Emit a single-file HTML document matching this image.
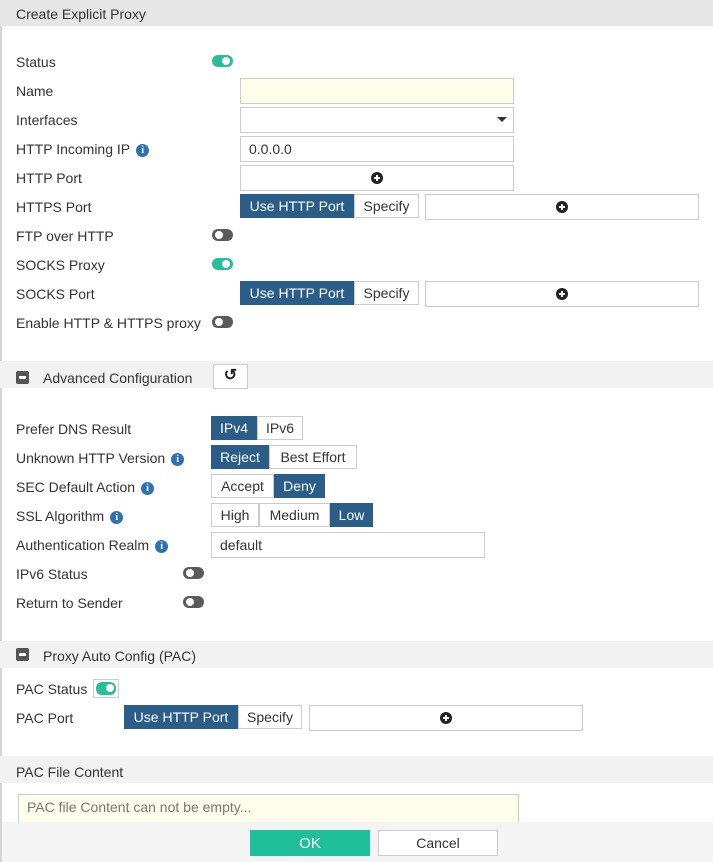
<!DOCTYPE html>
<html><head><meta charset="utf-8"><style>
*{box-sizing:border-box;margin:0;padding:0}
body{width:713px;height:862px;overflow:hidden;background:#fff;font-family:"Liberation Sans",sans-serif;font-size:14px;color:#333;position:relative}
.a{position:absolute}
.lbl{position:absolute;left:16px;line-height:16px;white-space:nowrap}
.bar{position:absolute;left:0;width:713px;background:#f2f2f2}
.inp{position:absolute;border:1px solid #ccc;background:#fff;height:26px}
.tg{position:absolute;width:21px;height:12px;border-radius:6px;background:#5a5a5a}
.tg::after{content:"";position:absolute;top:2px;left:3px;width:8px;height:8px;border-radius:50%;background:#fff}
.tg.on{background:#26bf97}
.tg.on::after{left:10px}
.btn{position:absolute;height:24px;border:1px solid #ccc;background:#fff;text-align:center;line-height:22px;white-space:nowrap}
.btn.s{background:#2a5d88;border-color:#2a5d88;color:#fff}
.info{display:inline-block;width:13px;height:13px;border-radius:50%;background:#2f72b4;color:#fff;font-size:10px;font-weight:bold;text-align:center;line-height:13px;vertical-align:1px;margin-left:6px;font-family:"Liberation Serif",serif}
.plus{position:absolute;width:12px;height:12px;border-radius:50%;background:#222}
.plus::before{content:"";position:absolute;left:3px;top:5px;width:6px;height:2px;background:#fff}
.plus::after{content:"";position:absolute;left:5px;top:3px;width:2px;height:6px;background:#fff}
.minus{position:absolute;left:16px;width:13px;height:13px;border-radius:2px;background:#555}
.minus::after{content:"";position:absolute;left:3px;top:5px;width:7px;height:3px;background:#fff}
</style></head><body>
<div class="a" style="left:0;top:0;width:713px;height:26px;background:#e6e6e6"></div>
<div class="lbl" style="top:6px">Create Explicit Proxy</div>
<div class="a" style="left:0;top:26px;width:2px;height:836px;background:#d4d4d4"></div>

<div class="lbl" style="top:54px">Status</div><div class="tg on" style="left:212px;top:55px"></div>
<div class="lbl" style="top:83px">Name</div><div class="inp" style="left:240px;top:78px;width:274px;background:#fefeea"></div>
<div class="lbl" style="top:112px">Interfaces</div><div class="inp" style="left:240px;top:107px;width:274px"></div>
<div class="a" style="left:497px;top:117px;border-left:5px solid transparent;border-right:5px solid transparent;border-top:5px solid #333"></div>
<div class="lbl" style="top:141px">HTTP Incoming IP<span class="info">i</span></div><div class="inp" style="left:240px;top:136px;width:274px;padding:4px 8px">0.0.0.0</div>
<div class="lbl" style="top:170px">HTTP Port</div><div class="inp" style="left:240px;top:165px;width:274px"></div><div class="plus" style="left:371px;top:172px"></div>
<div class="lbl" style="top:199px">HTTPS Port</div>
<div class="btn s" style="left:240px;top:194px;width:114px">Use HTTP Port</div><div class="btn" style="left:354px;top:194px;width:65px">Specify</div>
<div class="inp" style="left:425px;top:194px;width:274px"></div><div class="plus" style="left:556px;top:201px"></div>
<div class="lbl" style="top:228px">FTP over HTTP</div><div class="tg" style="left:212px;top:229px"></div>
<div class="lbl" style="top:257px">SOCKS Proxy</div><div class="tg on" style="left:212px;top:258px"></div>
<div class="lbl" style="top:286px">SOCKS Port</div>
<div class="btn s" style="left:240px;top:281px;width:114px">Use HTTP Port</div><div class="btn" style="left:354px;top:281px;width:65px">Specify</div>
<div class="inp" style="left:425px;top:281px;width:274px"></div><div class="plus" style="left:556px;top:288px"></div>
<div class="lbl" style="top:315px">Enable HTTP &amp; HTTPS proxy</div><div class="tg" style="left:212px;top:316px"></div>

<div class="bar" style="top:361px;height:27px"></div>
<div class="minus" style="top:371px"></div>
<div class="lbl" style="left:43px;top:370px">Advanced Configuration</div>
<div class="btn" style="left:213px;top:364px;width:35px;height:25px;font-weight:bold;font-size:16px;color:#222">&#x21BA;</div>

<div class="lbl" style="top:421px">Prefer DNS Result</div>
<div class="btn s" style="left:211px;top:416px;width:46px">IPv4</div><div class="btn" style="left:257px;top:416px;width:46px">IPv6</div>
<div class="lbl" style="top:450px">Unknown HTTP Version<span class="info">i</span></div>
<div class="btn s" style="left:211px;top:445px;width:58px">Reject</div><div class="btn" style="left:269px;top:445px;width:88px">Best Effort</div>
<div class="lbl" style="top:479px">SEC Default Action<span class="info">i</span></div>
<div class="btn" style="left:211px;top:474px;width:63px">Accept</div><div class="btn s" style="left:274px;top:474px;width:51px">Deny</div>
<div class="lbl" style="top:508px">SSL Algorithm<span class="info">i</span></div>
<div class="btn" style="left:211px;top:503px;width:48px">High</div><div class="btn" style="left:259px;top:503px;width:71px">Medium</div><div class="btn s" style="left:330px;top:503px;width:43px">Low</div>
<div class="lbl" style="top:537px">Authentication Realm<span class="info">i</span></div>
<div class="inp" style="left:211px;top:532px;width:274px;padding:4px 8px">default</div>
<div class="lbl" style="top:566px">IPv6 Status</div><div class="tg" style="left:183px;top:567px"></div>
<div class="lbl" style="top:595px">Return to Sender</div><div class="tg" style="left:183px;top:596px"></div>

<div class="bar" style="top:641px;height:27px"></div>
<div class="minus" style="top:648px"></div>
<div class="lbl" style="left:43px;top:648px">Proxy Auto Config (PAC)</div>
<div class="lbl" style="top:681px">PAC Status</div>
<div class="a" style="left:93px;top:679px;width:26px;height:19px;border:1px solid #ccc"></div>
<div class="tg on" style="left:96px;top:682px;width:20px;height:13px"></div>
<div class="lbl" style="top:710px">PAC Port</div>
<div class="btn s" style="left:124px;top:705px;width:114px">Use HTTP Port</div><div class="btn" style="left:238px;top:705px;width:64px">Specify</div>
<div class="inp" style="left:309px;top:705px;width:274px"></div><div class="plus" style="left:440px;top:712px"></div>

<div class="bar" style="top:756px;height:27px"></div>
<div class="lbl" style="top:764px">PAC File Content</div>
<div class="a" style="left:18px;top:794px;width:501px;height:30px;border:1px solid #ccc;background:#fefeea;color:#777;padding:4px 8px">PAC file Content can not be empty...</div>

<div class="a" style="left:0;top:822px;width:713px;height:40px;background:#f4f4f4"></div>
<div class="a" style="left:0;top:822px;width:2px;height:40px;background:#d4d4d4"></div>
<div class="btn" style="left:250px;top:830px;width:120px;height:26px;line-height:26px;background:#1fbf9a;border-color:#1fbf9a;color:#fff;font-size:15px">OK</div>
<div class="btn" style="left:378px;top:830px;width:120px;height:26px;line-height:25px">Cancel</div>
</body></html>
